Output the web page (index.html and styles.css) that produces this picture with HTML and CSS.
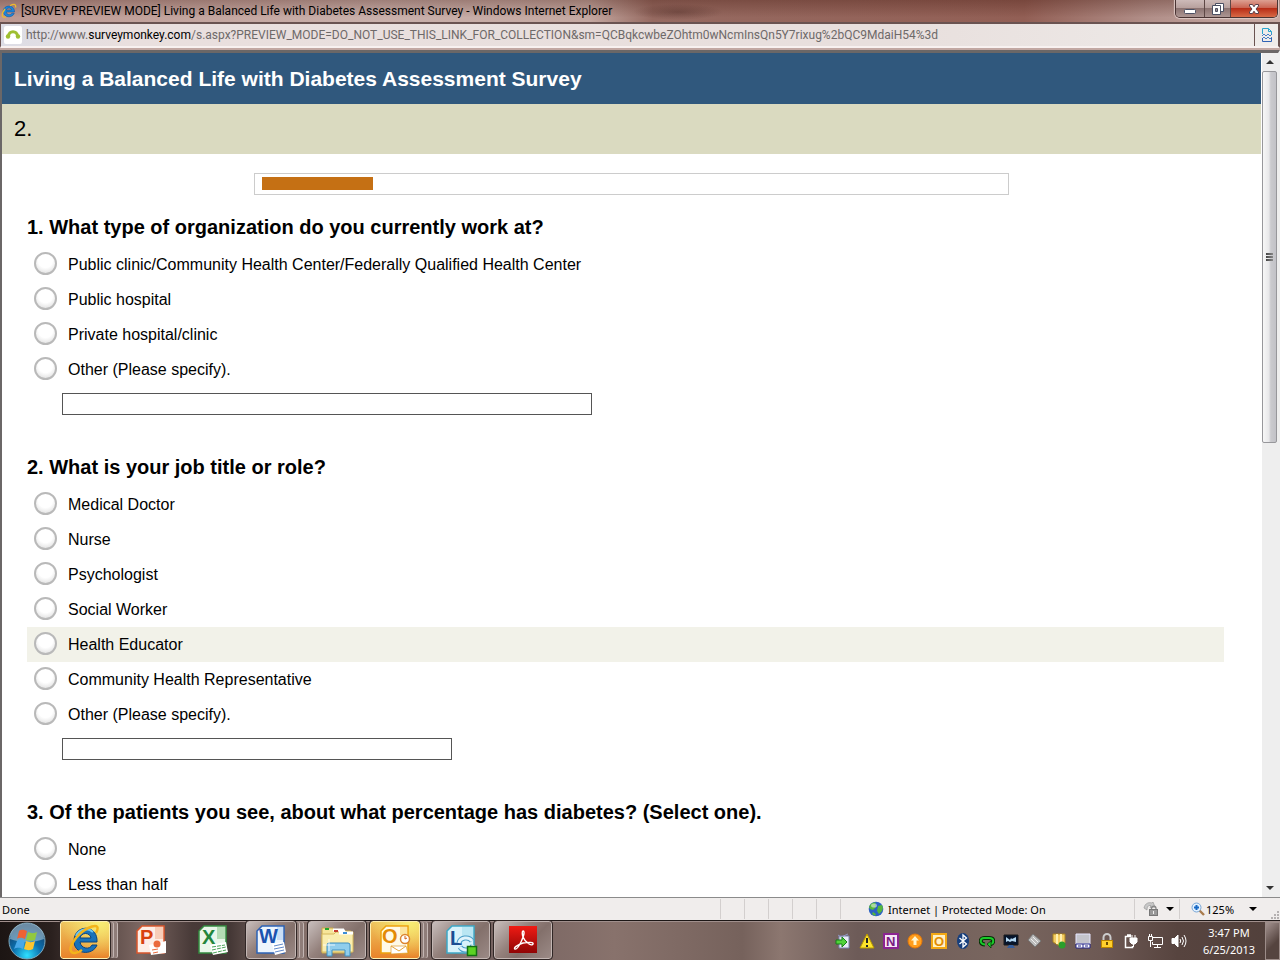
FILE: index.html
```html
<!DOCTYPE html>
<html lang="en">

<head>
  <meta charset="UTF-8" />
  <title>[SURVEY PREVIEW MODE] Living a Balanced Life with Diabetes Assessment Survey</title>
  <link rel="stylesheet" href="styles.css">
</head>

<body>

  <!-- Window title bar -->
  <header class="titlebar">
    <svg class="icon" viewBox="0 0 16 16">
      <path d="M13.5 9H5.2c.2 3 4.600 3.500 5.600 1.200h2.500C11.500 15.500 2.300 15 2.300 8.300 2.300 1.500 13.800 1 13.500 9zM5.300 7h5.200C10.200 4.200 5.700 4.200 5.300 7z" fill="#1d86d8" stroke="#0b4f9a" stroke-width=".5" />
      <path d="M14.500 4.500C15.500.5 12 1 9 2.700M4 6C0 11 .5 15.500 4.800 13.800" fill="none" stroke="#eebb2c" stroke-width="1.300" />
    </svg>
    <span class="window-title">[SURVEY PREVIEW MODE] Living a Balanced Life with Diabetes Assessment Survey - Windows Internet Explorer</span>
    <div class="window-buttons">
      <button type="button" class="min" aria-label="Minimize">
        <svg width="14" height="14" viewBox="0 0 14 14"><rect x="1.500" y="7.500" width="11" height="4" rx="1" fill="#fff" stroke="#4c5063" /></svg>
      </button>
      <button type="button" class="restore" aria-label="Restore">
        <svg width="14" height="14" viewBox="0 0 14 14">
          <path d="M4.500 1.500h8v8h-8z" fill="#fff" stroke="#4c5063" />
          <path d="M1.500 3.500h8v9h-8z" fill="#fff" stroke="#4c5063" />
          <path d="M4.500 6.500h2v3h-2z" fill="#a08f90" stroke="#4c5063" />
        </svg>
      </button>
      <button type="button" class="close" aria-label="Close">
        <svg width="14" height="14" viewBox="0 0 14 14"><path d="M2.500 2.500h3L7 4.800l1.500-2.300h3v1.500L9 7l2.500 3v1.500h-3L7 9.200l-1.500 2.300h-3V10L5 7 2.500 4z" fill="#fff" stroke="#5b3f49" /></svg>
      </button>
    </div>
  </header>

  <!-- Address bar -->
  <div class="address">
    <svg class="favicon" viewBox="0 0 18 18">
      <rect width="18" height="18" rx="2" fill="#fff" />
      <path d="M4.500 10.500C4.500 4 13.500 4 13.500 10.500" fill="none" stroke="#9fbf32" stroke-width="3" />
      <circle cx="4" cy="10.500" r="2.200" fill="#9fbf32" />
      <circle cx="14" cy="10.500" r="2.200" fill="#9fbf32" />
    </svg>
    <span class="url">http://www.<b>surveymonkey.com</b>/s.aspx?PREVIEW_MODE=DO_NOT_USE_THIS_LINK_FOR_COLLECTION&amp;sm=QCBqkcwbeZOhtm0wNcmInsQn5Y7rixug%2bQC9MdaiH54%3d</span>
    <button type="button" class="compat" aria-label="Compatibility View">
      <svg width="12" height="16" viewBox="0 0 12 16" fill="none">
        <path d="M1.500 7V1.500h6l3 3V7M7.500 1.500v3h3" stroke="#2aa5cf" />
        <path d="M1 9l2-2 2 2 2-2 2 2 2-2M1 12l2-2 2 2 2-2 2 2 2-2" stroke="#4a7fc4" />
        <path d="M1.500 11v3.500h9V11" stroke="#2f62b5" />
      </svg>
    </button>
  </div>

  <!-- Page -->
  <div class="viewport">
    <main class="survey">
      <h1>Living a Balanced Life with Diabetes Assessment Survey</h1>
      <h2>2.</h2>

      <div class="progress"><div class="progress-fill"></div></div>

      <form>
        <fieldset>
          <legend>1. What type of organization do you currently work at?</legend>
          <label class="option"><input type="radio" name="organization"> Public clinic/Community Health Center/Federally Qualified Health Center</label>
          <label class="option"><input type="radio" name="organization"> Public hospital</label>
          <label class="option"><input type="radio" name="organization"> Private hospital/clinic</label>
          <label class="option"><input type="radio" name="organization"> Other (Please specify).</label>
          <input type="text" class="other wide" aria-label="Other organization">
        </fieldset>

        <fieldset>
          <legend>2. What is your job title or role?</legend>
          <label class="option"><input type="radio" name="role"> Medical Doctor</label>
          <label class="option"><input type="radio" name="role"> Nurse</label>
          <label class="option"><input type="radio" name="role"> Psychologist</label>
          <label class="option"><input type="radio" name="role"> Social Worker</label>
          <label class="option active"><input type="radio" name="role"> Health Educator</label>
          <label class="option"><input type="radio" name="role"> Community Health Representative</label>
          <label class="option"><input type="radio" name="role"> Other (Please specify).</label>
          <input type="text" class="other" aria-label="Other role">
        </fieldset>

        <fieldset>
          <legend>3. Of the patients you see, about what percentage has diabetes? (Select one).</legend>
          <label class="option"><input type="radio" name="patients"> None</label>
          <label class="option"><input type="radio" name="patients"> Less than half</label>
        </fieldset>
      </form>
    </main>

    <div class="scrollbar">
      <button type="button" aria-label="Scroll up"><svg width="8" height="4" viewBox="0 0 8 4"><path d="M0 4l4-4 4 4z" fill="#333" /></svg></button>
      <div class="track">
        <div class="thumb"><i></i><i></i><i></i></div>
      </div>
      <button type="button" aria-label="Scroll down"><svg width="8" height="4" viewBox="0 0 8 4"><path d="M0 0l4 4 4-4z" fill="#333" /></svg></button>
    </div>
  </div>

  <!-- Status bar -->
  <div class="statusbar">
    <span class="done">Done</span>
    <span class="cell"></span><span class="cell"></span><span class="cell"></span><span class="cell"></span><span class="cell"></span>
    <span class="cell zone">
      <svg class="icon" viewBox="0 0 16 16">
        <circle cx="8" cy="8" r="7.300" fill="#2c62c4" />
        <path d="M2 4c2-3 6-3 6-2L7 4l1 2-3 3-3-1-1-2zM10 5l4-1 1 3-1 3-3 3-2-3zM5 11l3 2-1 2-3-2z" fill="#56b63c" />
        <ellipse cx="6" cy="4.500" rx="3" ry="2" fill="#fff" opacity=".5" />
      </svg>
      Internet | Protected Mode: On
    </span>
    <button type="button" class="cell filter" aria-label="Privacy">
      <svg class="icon" viewBox="0 0 16 16">
        <path d="M1 7c1-5 5-6 8-5l1-1 2 5-5 .5 1-2C5 4 4 6 4 9z" fill="#c8c8c8" stroke="#999" stroke-width=".7" />
        <path d="M8.500 9V7.500a2.200 2.200 0 0 1 4.500 0V9" fill="none" stroke="#888" stroke-width="1.300" />
        <rect x="6.500" y="8.500" width="8" height="6" fill="#999" stroke="#777" />
        <path d="M10.500 10v3" stroke="#eee" />
      </svg>
      <svg class="caret" viewBox="0 0 8 4"><path d="M0 0l4 4 4-4z" /></svg>
    </button>
    <button type="button" class="cell zoom">
      <svg class="zoom-icon" viewBox="0 0 14 14">
        <path d="M8 8l5 5" stroke="#a97c4d" stroke-width="2.400" />
        <circle cx="5.500" cy="5.500" r="4.500" fill="#e2f1ff" stroke="#7aa7d5" />
        <path d="M5.500 3v5M3 5.500h5" stroke="#1769c5" stroke-width="2" />
      </svg>
      125%
      <svg class="caret" viewBox="0 0 8 4"><path d="M0 0l4 4 4-4z" /></svg>
      <svg class="grip" viewBox="0 0 8 8" fill="#b5b1b1"><path d="M6 0h2v2H6zM3 3h2v2H3zM6 3h2v2H6zM0 6h2v2H0zM3 6h2v2H3zM6 6h2v2H6z" /></svg>
    </button>
  </div>

  <!-- Taskbar -->
  <footer class="taskbar">
    <button type="button" class="start" aria-label="Start">
      <svg width="40" height="40" viewBox="0 0 40 40">
        <defs>
          <radialGradient id="orb" cx=".5" cy=".9" r=".8">
            <stop offset="0" stop-color="#2fe0ff" />
            <stop offset=".5" stop-color="#0b6fae" />
            <stop offset="1" stop-color="#153f66" />
          </radialGradient>
        </defs>
        <circle cx="20" cy="20" r="18" fill="url(#orb)" stroke="#7fa9bd" />
        <path d="M3 18C3-3 37-3 37 18 27 22 13 22 3 18z" fill="#c4dbe7" opacity=".5" />
        <path d="M12 10c3-2 5-1 8 0l-2 8c-3-1-5-2-8 0z" fill="#ee6233" />
        <path d="M21 11c3 1 5 2 9 0l-2 8c-3 1-6 1-9 0z" fill="#91c83e" />
        <path d="M10 20c3-2 5-1 8 0l-2 8c-3-1-5-2-9 0z" fill="#48a8e8" />
        <path d="M19 20c3 1 5 2 9 0l-2 8c-4 2-6 1-9 0z" fill="#fcc52f" />
      </svg>
    </button>

    <div class="tasks">
      <button type="button" class="task open lit stack" aria-label="Internet Explorer">
        <svg width="34" height="34" viewBox="0 0 34 34">
          <path d="M29 19H12c1 7 10 8 12 3h5c-4 11-24 10-23-5C7 1 30 1 29 19zM12 15h11c-1-6-10-6-11 0z" fill="#1972b9" stroke="#0a427f" />
          <path d="M8 13C11 6 20 4 25 9" fill="none" stroke="#6ec7ef" stroke-width="2" />
          <path d="M28 10C35-3 17 4 8 15-2 28 3 34 14 27" fill="none" stroke="#f3b41b" stroke-width="2.500" />
        </svg>
      </button>
      <button type="button" class="task" aria-label="PowerPoint">
        <svg width="32" height="32" viewBox="0 0 32 32">
          <path d="M2 7l5-5h22v27H2z" fill="#fdeee6" stroke="#d9562b" stroke-width="1.500" />
          <path d="M20 3h8v12h-8z" fill="#f7cdb8" />
          <text x="5" y="20" class="letter" fill="#d9430f">P</text>
          <path d="M14 21l17-4v12l-15 2z" fill="#fff" />
          <circle cx="22" cy="20" r="3.500" fill="#ea6b3d" />
          <path d="M17 26l6-1M18 29l5-1" stroke="#ea6b3d" />
        </svg>
      </button>
      <button type="button" class="task" aria-label="Excel">
        <svg width="32" height="32" viewBox="0 0 32 32">
          <path d="M2 7l5-5h22v27H2z" fill="#eaf6ea" stroke="#338a3f" stroke-width="1.500" />
          <path d="M20 3h8v12h-8z" fill="#b5dcb5" />
          <text x="5" y="20" class="letter" fill="#23853b">X</text>
          <path d="M13 21l16-3 2 10-15 3z" fill="#fff" />
          <path d="M15 23l13-2M15 26l14-3M16 29l13-3" stroke="#4ca359" stroke-dasharray="4 1" />
        </svg>
      </button>
      <button type="button" class="task open stack" aria-label="Word">
        <svg width="32" height="32" viewBox="0 0 32 32">
          <path d="M2 7l5-5h22v27H2z" fill="#edf5fd" stroke="#2b62b5" stroke-width="1.500" />
          <path d="M22 3h6v13h-6z" fill="#c9def5" />
          <text x="4" y="19" class="letter" fill="#1b53b0">W</text>
          <path d="M17 20l12-2 2 10-11 3z" fill="#fff" />
          <path d="M19 22l9-2M19 25l10-2M20 28l9-2" stroke="#6088c9" />
        </svg>
      </button>
      <button type="button" class="task open" aria-label="Windows Explorer">
        <svg width="36" height="34" viewBox="0 0 36 34">
          <path d="M3 8V5h11l2 3h16v22H3z" fill="#f6e59a" stroke="#c7a647" />
          <path d="M3 11h12l2-2h17v20H3z" fill="#f9edae" stroke="#d6b85c" />
          <path d="M14 7h10l2 3h8M20 10h12" fill="none" stroke="#fff" stroke-width="3" />
          <path d="M6 5h4v2H6z" fill="#23a62c" /><path d="M15 7h4v2h-4z" fill="#c43c2e" /><path d="M24 9h4v2h-4z" fill="#3c8ed8" />
          <path d="M8 33V22q0-2 2-2h19q2 0 2 2v11h-5v-6H13v6z" fill="#8fcdec" stroke="#3f90c0" />
          <path d="M10 16v12M4 22h12" stroke="#fff" opacity=".8" />
        </svg>
      </button>
      <button type="button" class="task open lit stack" aria-label="Outlook">
        <svg width="32" height="32" viewBox="0 0 32 32">
          <path d="M2 7l5-5h22v27H2z" fill="#fffae6" stroke="#eea30c" stroke-width="1.500" />
          <path d="M21 3h7v8h-7z" fill="#fce5a0" />
          <text x="3" y="19" class="letter" fill="#e48b05">O</text>
          <path d="M12 22h15l2 7-17 1z" fill="#fff" stroke="#dc9b33" stroke-width=".7" />
          <path d="M12 22l8 5 7-5" fill="none" stroke="#e6a63c" />
          <circle cx="26" cy="15" r="4.500" fill="#fff" stroke="#dc8530" stroke-width="1.500" />
          <path d="M26 12v3l2-1" fill="none" stroke="#cf5a12" />
        </svg>
      </button>
      <button type="button" class="task open" aria-label="Lync">
        <svg width="34" height="34" viewBox="0 0 34 34">
          <path d="M3 8l5-5h22v27H3z" fill="#d8f2fa" stroke="#3ca8c6" stroke-width="1.500" />
          <path d="M18 4h11v11H18z" fill="#b9e6f3" />
          <text x="6" y="22" class="letter" fill="#194d93">L</text>
          <path d="M15 20a7 6 0 0 1 13-2M29 22a7 6 0 0 1-13 2" fill="none" stroke="#4c9fc8" stroke-width="5" />
          <path d="M15 20a7 6 0 0 1 13-2M29 22a7 6 0 0 1-13 2" fill="none" stroke="#dff3fc" stroke-width="3" />
          <rect x="23.500" y="23.500" width="9" height="9" fill="#5bd323" stroke="#136f13" stroke-width="1.500" />
        </svg>
      </button>
      <button type="button" class="task open" aria-label="Adobe Reader">
        <svg width="28" height="28" viewBox="0 0 28 28">
          <defs><linearGradient id="pdf" x2="0" y2="1"><stop stop-color="#ef1b14" /><stop offset="1" stop-color="#900505" /></linearGradient></defs>
          <rect width="28" height="27" fill="url(#pdf)" />
          <path d="M6 23c-2-1 2-4 8-6 6-1 11-1 10 1-1 3-8-2-10-7-1-3-1-6 0-6 2 0 1 5-2 11-2 4-4 8-6 7z" fill="none" stroke="#fff" stroke-width="1.400" />
        </svg>
      </button>
    </div>

    <div class="tray">
      <svg class="icon" viewBox="0 0 16 16"><path d="M4 3h10v12H4z" fill="#e8eaf5" stroke="#7b82af" /><path d="M3 2l3 2 7-3" stroke="#9299bf" fill="none" /><path d="M1 7h6V4l5 5-5 5v-3H1z" fill="#51d23a" stroke="#187e18" /></svg>
      <svg class="icon" viewBox="0 0 16 16"><path d="M8 1l7 14H1z" fill="#ffe52c" stroke="#b99800" /><path d="M8 5v5M8 12v2" stroke="#222" stroke-width="2" /></svg>
      <svg class="icon" viewBox="0 0 16 16"><path d="M1 1h14v14H1z" fill="#f5e6f6" stroke="#8b2492" stroke-width="2" /><text x="3" y="13" class="mini" fill="#7a1b80">N</text></svg>
      <svg class="icon" viewBox="0 0 16 16"><circle cx="8" cy="8" r="7" fill="#ff9d1c" stroke="#e67808" /><path d="M8 3l4 4.500H9.500V12h-3V7.500H4z" fill="#fff5cf" /></svg>
      <svg class="icon" viewBox="0 0 16 16"><path d="M1 1h14v14H1z" fill="#fff1c4" stroke="#f3a814" stroke-width="2" /><text x="3" y="13" class="mini" fill="#e38c00">O</text></svg>
      <svg class="icon" viewBox="0 0 16 16"><ellipse cx="8" cy="8" rx="6" ry="8" fill="#173f7d" /><path d="M4.500 5l7 6L8 14V2l3.500 3-7 6" fill="none" stroke="#fff" stroke-width="1.300" /></svg>
      <svg class="icon" viewBox="0 0 16 16" fill="none"><path d="M6 11.500C0 11 1 5 5 5h5c6 0 5 6 1 6" stroke="#062d06" stroke-width="4" /><path d="M6 11.500C0 11 1 5 5 5h5c6 0 5 6 1 6" stroke="#19cb29" stroke-width="2" /><path d="M12 8l-4 3 4 4z" fill="#19cb29" stroke="#062d06" stroke-width=".7" /></svg>
      <svg class="icon" viewBox="0 0 16 16"><path d="M1 2h14v10H1z" fill="#06152c" stroke="#1c1c1c" /><path d="M3 4l4 3 1-2 1 1 4-2v5l-4-1-2 1-2-1-2 1z" fill="#b4d8f2" /><path d="M6 12h4l2 3H4z" fill="#365e9c" /></svg>
      <svg class="icon" viewBox="0 0 16 16"><path d="M6 1l8 7-6 6-7-7z" fill="#bbb" stroke="#777" /><path d="M4 6l5 5M6 4l5 5" stroke="#eee" /></svg>
      <svg class="icon" viewBox="0 0 16 16"><path d="M2 1h12v9l-4 4-8-5z" fill="#f4ce62" stroke="#a98120" /><path d="M6 1v10M10 1v9" stroke="#fff0ae" stroke-width="2" /><circle cx="11" cy="12" r="3.500" fill="#2b9e2b" /></svg>
      <svg class="icon" viewBox="0 0 16 16"><path d="M1 1h14v10H1z" fill="#c4c4cc" stroke="#e6e6ff" /><path d="M1 11h14v4H1z" fill="#fff" stroke="#27278a" /><path d="M8 11v4M3 13h3M10 13h3" stroke="#27278a" /></svg>
      <svg class="icon" viewBox="0 0 16 16"><path d="M4.500 8V4.500a3.500 3.500 0 0 1 7 0V8" fill="none" stroke="#ccc" stroke-width="2" /><rect x="2.500" y="7.500" width="11" height="7" fill="#ffd02d" stroke="#bb8400" /><path d="M8 9v3" stroke="#6b4b00" stroke-width="2" /></svg>
      <svg class="icon" viewBox="0 0 16 16" fill="none" stroke="#fff"><path d="M8 3.500H2.500v11h7V13M4 2h4" stroke-width="1.500" /><path d="M7 5h7v4l-2 2H9L7 9z" fill="#fff" /><path d="M9 5V2M12 5V2M10.500 11v3" /></svg>
      <svg class="icon" viewBox="0 0 16 16" fill="none" stroke="#fff"><path d="M6 4.500h9.500v7H5.500V9M7 14.500h7M10.500 12v2" /><path d="M1.500 3.500h4v4h-4zM2.500 3V1M4.500 3V1M3.500 8v6" /></svg>
      <svg class="icon" viewBox="0 0 16 16" fill="none" stroke="#fff"><path d="M1 5.500h2.500L7 2v12l-3.500-3.500H1z" fill="#fff" /><path d="M9 6q1.500 2 0 4M11 4q3 4 0 8M13 2q4 6 0 12" /></svg>
      <div class="clock">3:47 PM<br>6/25/2013</div>
      <button type="button" class="show-desktop" aria-label="Show desktop"></button>
    </div>
  </footer>

</body>

</html>
```
FILE: styles.css
```css
* {
  box-sizing: border-box;
}

body {
  margin: 0;
  height: 100vh;
  display: flex;
  flex-direction: column;
  overflow: hidden;
  font-family: "Noto Sans", "Open Sans", sans-serif;
  font-size: 11px;
  color: #000;
  background: #c2a8a3;
}

button {
  margin: 0;
  padding: 0;
  border: none;
  background: none;
  font: inherit;
  color: inherit;
}

svg {
  display: block;
  flex: none;
}

.icon {
  width: 16px;
  height: 16px;
}

/* Title bar */
.titlebar {
  flex: none;
  display: flex;
  align-items: center;
  height: 22px;
  padding: 0 2px 0 1px;
  background:
    radial-gradient(ellipse 45px 8px at 678px 12px, rgba(50, 20, 15, 0.3), transparent),
    linear-gradient(rgba(60, 15, 5, 0.3), transparent 80%),
    linear-gradient(90deg, #bd9a93, #c9b0ab 30%, #c4a8a1 46%, #966a61 51%, #925f55 80%, #b2908a 90%, #c8aca6);
}

.window-title,
.url {
  flex: 1;
  margin-left: 4px;
  font-family: Roboto, "Open Sans", sans-serif;
  font-size: 12px;
  white-space: nowrap;
}

.window-buttons {
  display: flex;
  align-self: flex-start;
  height: 18px;
  border: 1px solid #4a3433;
  border-top: none;
  border-radius: 0 0 5px 5px;
  overflow: hidden;
  box-shadow: 0 0 1px 1px #dfcac6;
}

.window-buttons button {
  display: flex;
  align-items: center;
  justify-content: center;
  border-right: 1px solid #5d4745;
  background: linear-gradient(#cdbab8, #b8a19e 45%, #8c7371 50%, #ad9693);
}

.window-buttons .min {
  width: 29px;
}

.window-buttons .restore {
  width: 26px;
}

.window-buttons .close {
  width: 46px;
  border: none;
  background: linear-gradient(#dda092, #ca6553 45%, #b82d17 50%, #d86a46);
}

/* Address bar */
.address {
  flex: none;
  display: flex;
  align-items: center;
  height: 26px;
  border: 2px solid #6a5351;
  border-left-width: 1px;
  border-bottom-color: #f8f1f0;
  background: linear-gradient(90deg, #dcdde6, #e9dfde 10%, #e8dfdd 70%, #efecea);
}

.favicon {
  width: 18px;
  height: 18px;
  margin-left: 3px;
}

.url {
  color: #6e6969;
}

.url b {
  font-weight: normal;
  color: #000;
}

.compat {
  display: flex;
  align-items: center;
  justify-content: center;
  width: 24px;
  align-self: stretch;
  border-left: 1px solid #6a5351;
}

/* Page */
.viewport {
  flex: 1;
  min-height: 0;
  display: flex;
  margin-top: 2px;
  border: solid #6b6767;
  border-width: 3px 2px 0;
  border-right-color: #eee;
  background: #fff;
}

.survey {
  flex: 1;
  overflow: hidden;
  margin-bottom: 2px;
  font-family: "Liberation Sans", Arial, sans-serif;
}

.survey h1,
.survey h2 {
  margin: 0;
  padding: 0 12px;
  line-height: 50px;
}

.survey h1 {
  font-size: 21px;
  line-height: 51px;
  color: #fff;
  background: #30587d;
}

.survey h2 {
  font-size: 22px;
  font-weight: normal;
  background: #dadac0;
}

.progress {
  width: 60%;
  height: 22px;
  margin: 19px auto 20px;
  padding: 3px 7px;
  border: 1px solid #ccc;
}

.progress-fill {
  width: 15%;
  height: 13px;
  background: #c57014;
}

.survey form {
  padding: 0 37px 0 25px;
}

fieldset {
  min-width: 0;
  margin: 0 0 40px;
  padding: 0;
  border: none;
}

legend {
  padding: 0;
  margin-bottom: 8px;
  font-size: 20px;
  line-height: 24px;
  font-weight: bold;
}

.option {
  display: flex;
  align-items: center;
  gap: 11px;
  height: 35px;
  padding-left: 7px;
  font-size: 16px;
}

.option.active {
  background: #f2f2e9;
}

.option input {
  appearance: none;
  width: 23px;
  height: 23px;
  margin: 0 0 2px;
  border: 2px solid #b9b9b9;
  border-radius: 50%;
  background: radial-gradient(circle at 50% 35%, #fff 45%, #d6d6d6);
}

.other {
  display: block;
  width: 390px;
  height: 22px;
  margin: 6px 0 0 35px;
  padding: 0 4px;
  border: 1px solid #555;
  background: #fff;
}

.other.wide {
  width: 530px;
}

/* Scrollbar */
.scrollbar {
  flex: none;
  display: flex;
  flex-direction: column;
  width: 17px;
  border-left: 1px solid #fff;
  background: #eee;
}

.scrollbar button {
  display: flex;
  align-items: center;
  justify-content: center;
  height: 18px;
}

.track {
  flex: 1;
}

.thumb {
  display: flex;
  flex-direction: column;
  align-items: center;
  justify-content: center;
  gap: 1px;
  width: 15px;
  height: 46%;
  border: 1px solid #97979b;
  border-radius: 2px;
  background: linear-gradient(90deg, #f7f7f7, #e8e8ea 45%, #cacace 60%, #c2c2c7);
}

.thumb i {
  width: 7px;
  height: 2px;
  background: linear-gradient(90deg, #444, #888);
}

/* Status bar */
.statusbar {
  flex: none;
  display: flex;
  align-items: center;
  height: 23px;
  border-top: 1px solid #8b8b8b;
  background: #f0edec;
}

.done {
  flex: 1;
  padding-left: 2px;
}

.cell {
  display: flex;
  align-items: center;
  width: 24px;
  height: 20px;
  border-left: 1px solid #d3cfce;
}

.zone {
  width: 294px;
  padding-left: 27px;
  gap: 4px;
}

.filter {
  width: 45px;
  padding-left: 8px;
  gap: 7px;
}

.zoom {
  width: 101px;
  padding-left: 11px;
  gap: 1px;
}

.zoom-icon {
  width: 14px;
  height: 14px;
}

.caret {
  width: 8px;
  height: 4px;
}

.zoom .caret {
  margin-left: 14px;
}

.grip {
  width: 8px;
  height: 8px;
  margin: auto 1px 0 auto;
}

/* Taskbar */
.taskbar {
  flex: none;
  display: flex;
  height: 40px;
  border-top: 1px solid #1d1716;
  box-shadow: inset 0 1px #a08f8c;
  color: #fff;
  background: linear-gradient(90deg, #1c1513, #2a201e 4%, #7c6762 11%, #483a38 15%, #453836 18%, #85706a 22%, #756260 38%, #88726c 48%, #76625c 58%, #8c7770 61%, #6d5b58 67%, #79665f 78%, #6d5954 86%, #57443f 92%, #51403b);
}

.start {
  width: 60px;
  padding-left: 7px;
}

.tasks {
  flex: 1;
  display: flex;
  gap: 4px;
}

.task {
  display: flex;
  align-items: center;
  justify-content: center;
  width: 58px;
  height: 38px;
}

.task.open {
  border: 1px solid #c3b6b3;
  border-radius: 3px;
  outline: 1px solid #302625;
  background: linear-gradient(135deg, #c7bdbb, #94817c 40%, #83706b 60%, #9b8a86);
}

/* several windows grouped under one button */
.task.stack {
  width: 50px;
  margin-right: 8px;
  box-shadow: 4px 0 0 -1px #8f7d79, 5px 0 0 -1px #c3b6b3, 8px 0 0 -1px #8f7d79, 9px 0 0 -1px #c3b6b3;
}

.task.lit {
  border-color: #fff0ae;
  background: radial-gradient(ellipse at 80% 0, #f8ee74, transparent 70%), linear-gradient(#edc45e, #e9832a);
}

.letter {
  font: bold 20px "Liberation Sans", sans-serif;
}

.mini {
  font: bold 13px "Liberation Sans", sans-serif;
}

.tray {
  display: flex;
  align-items: center;
  gap: 8px;
}

.clock {
  width: 68px;
  margin-right: 2px;
  line-height: 17px;
  text-align: center;
}

.show-desktop {
  width: 15px;
  height: 38px;
  margin-left: -8px;
  border: 1px solid #9c8c88;
  background: linear-gradient(135deg, #a3928f, #55443f 60%);
}
```
